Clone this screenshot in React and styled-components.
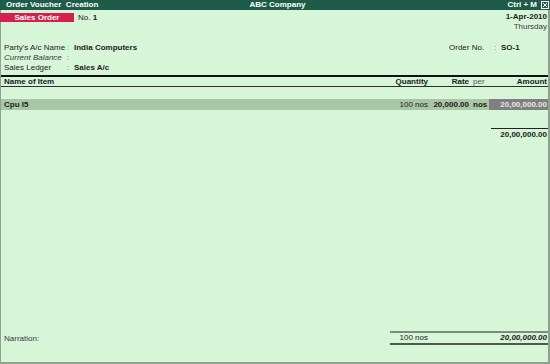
import React from "react";
import styled, { createGlobalStyle } from "styled-components";

const Global = createGlobalStyle`
  html, body { margin: 0; padding: 0; background: #d7f5d7; }
  * { box-sizing: border-box; }
`;

const Screen = styled.div`
  width: 550px;
  height: 364px;
  display: flex;
  flex-direction: column;
  font-family: "Liberation Sans", Arial, sans-serif;
  font-size: 8px;
  color: #1c1c1c;
  background: #d7f5d7;
`;

const TitleBar = styled.div`
  height: 10px;
  display: grid;
  grid-template-columns: 1fr auto 1fr;
  align-items: center;
  padding: 0 1px 0 6px;
  background: #1e5b48;
  color: #ffffff;
  font-weight: bold;
  line-height: 10px;
  white-space: pre;
`;

const TitleRight = styled.div`
  display: flex;
  justify-content: flex-end;
  align-items: center;
  gap: 4px;
`;

const Body = styled.div`
  flex: 1;
  display: flex;
  flex-direction: column;
  border-left: 1px solid #8ea38e;
  border-right: 2px solid #8ea38e;
  border-bottom: 2px solid #8ea38e;
`;

const TopRow = styled.div`
  display: flex;
  justify-content: space-between;
  align-items: flex-start;
  margin-top: 3px;
  line-height: 10px;
`;

const Pill = styled.div`
  width: 74px;
  height: 9px;
  margin-left: -1px;
  background: #d51f4f;
  color: #ffffff;
  font-weight: bold;
  text-align: center;
  line-height: 9px;
`;

const NoLabel = styled.span`
  margin-left: 4px;
  line-height: 9px;
`;

const Bold = styled.b`
  font-weight: bold;
`;

const Left = styled.div`
  display: flex;
  align-items: center;
`;

const DateBlock = styled.div`
  text-align: right;
  padding-right: 1px;
  margin-top: -1px;
`;

const Day = styled.div`
  color: #3f3550;
`;

const Party = styled.div`
  margin-top: 11px;
  display: flex;
  flex-direction: column;
  line-height: 10px;
`;

const FieldRow = styled.div`
  display: flex;
  align-items: center;
`;

const Label = styled.span`
  width: ${(p) => p.w}px;
  padding-left: ${(p) => p.pl || 0}px;
  font-style: ${(p) => (p.italic ? "italic" : "normal")};
  color: ${(p) => (p.italic ? "#3a3a3a" : "#1c1c1c")};
`;

const Sep = styled.span`
  width: 7px;
  color: #707070;
`;

const Value = styled.span`
  font-weight: bold;
  flex: ${(p) => (p.grow ? 1 : "none")};
`;

const RightField = styled.div`
  width: 99px;
  display: flex;
`;

const Thick = styled.div`
  margin-top: 2px;
  height: 2px;
  background: #111;
`;

const Row = styled.div`
  display: flex;
  align-items: center;
  height: ${(p) => p.h || 10}px;
  line-height: ${(p) => p.h || 10}px;
  background: ${(p) => p.bg || "transparent"};
  margin-top: ${(p) => p.mt || 0}px;
  border-bottom: ${(p) => (p.line ? "1px solid #303030" : "none")};
  font-weight: ${(p) => (p.head ? "bold" : "normal")};
`;

const NameCol = styled.div`
  flex: 1;
  padding-left: 3px;
  font-weight: bold;
`;

const QtyCol = styled.div`
  width: 60px;
  text-align: right;
  padding-right: 2px;
`;

const RateCol = styled.div`
  width: 40px;
  text-align: right;
  padding-right: 1px;
  font-weight: bold;
`;

const PerCol = styled.div`
  width: 19px;
  padding-left: 3px;
  font-weight: ${(p) => (p.bold ? "bold" : "normal")};
  color: ${(p) => (p.bold ? "#1c1c1c" : "#555")};
`;

const AmountCol = styled.div`
  width: 59px;
  height: 100%;
  text-align: right;
  padding-right: 1px;
  font-weight: bold;
  background: ${(p) => (p.sel ? "#7f7f7f" : "transparent")};
  color: ${(p) => (p.sel ? "#e6e6e6" : "#1c1c1c")};
`;

const Total = styled.div`
  align-self: flex-end;
  width: 57px;
  margin-top: 18px;
  border-top: 1px solid #222;
  text-align: right;
  padding-right: 1px;
  line-height: 12px;
  font-weight: bold;
`;

const Spacer = styled.div`
  flex: 1;
`;

const Footer = styled.div`
  display: flex;
  justify-content: space-between;
  align-items: center;
  margin-bottom: 17px;
`;

const Narration = styled.span`
  padding-left: 3px;
  color: #3a3a4a;
`;

const Totals = styled.div`
  width: 158px;
  display: flex;
  border-top: 2px solid #7a8c7a;
  border-bottom: 2px solid #4b5a4b;
  line-height: 10px;
`;

const TotQty = styled.span`
  width: 38px;
  text-align: right;
`;

const TotAmt = styled.span`
  flex: 1;
  text-align: right;
  padding-right: 1px;
  font-weight: bold;
  font-style: italic;
`;

function CloseBox() {
  return (
    <svg width="8" height="8" viewBox="0 0 8 8">
      <rect x="0.5" y="0.5" width="7" height="7" fill="none" stroke="#fff" />
      <path d="M2 2 L6 6 M6 2 L2 6" stroke="#fff" strokeWidth="1" />
    </svg>
  );
}

export default function App() {
  return (
    <>
      <Global />
      <Screen>
        <TitleBar>
          <span>Order Voucher  Creation</span>
          <span>ABC Company</span>
          <TitleRight>
            <span>Ctrl + M</span>
            <CloseBox />
          </TitleRight>
        </TitleBar>
        <Body>
          <TopRow>
            <Left>
              <Pill>Sales Order</Pill>
              <NoLabel>
                No. <Bold>1</Bold>
              </NoLabel>
            </Left>
            <DateBlock>
              <Bold>1-Apr-2010</Bold>
              <Day>Thursday</Day>
            </DateBlock>
          </TopRow>
          <Party>
            <FieldRow>
              <Label w={66} pl={3}>Party's A/c Name</Label>
              <Sep>:</Sep>
              <Value grow>India Computers</Value>
              <RightField>
                <Label w={45}>Order No.</Label>
                <Sep>:</Sep>
                <Value>SO-1</Value>
              </RightField>
            </FieldRow>
            <FieldRow>
              <Label w={66} pl={3} italic>Current Balance</Label>
              <Sep>:</Sep>
            </FieldRow>
            <FieldRow>
              <Label w={66} pl={3}>Sales Ledger</Label>
              <Sep>:</Sep>
              <Value grow>Sales A/c</Value>
            </FieldRow>
          </Party>
          <Thick />
          <Row h={10} line head>
            <NameCol>Name of Item</NameCol>
            <QtyCol>Quantity</QtyCol>
            <RateCol>Rate</RateCol>
            <PerCol>per</PerCol>
            <AmountCol>Amount</AmountCol>
          </Row>
          <Row h={11} mt={12} bg="#a9c6a5">
            <NameCol>Cpu I5</NameCol>
            <QtyCol>100 nos</QtyCol>
            <RateCol>20,000.00</RateCol>
            <PerCol bold>nos</PerCol>
            <AmountCol sel>20,00,000.00</AmountCol>
          </Row>
          <Total>20,00,000.00</Total>
          <Spacer />
          <Footer>
            <Narration>Narration:</Narration>
            <Totals>
              <TotQty>100 nos</TotQty>
              <TotAmt>20,00,000.00</TotAmt>
            </Totals>
          </Footer>
        </Body>
      </Screen>
    </>
  );
}
